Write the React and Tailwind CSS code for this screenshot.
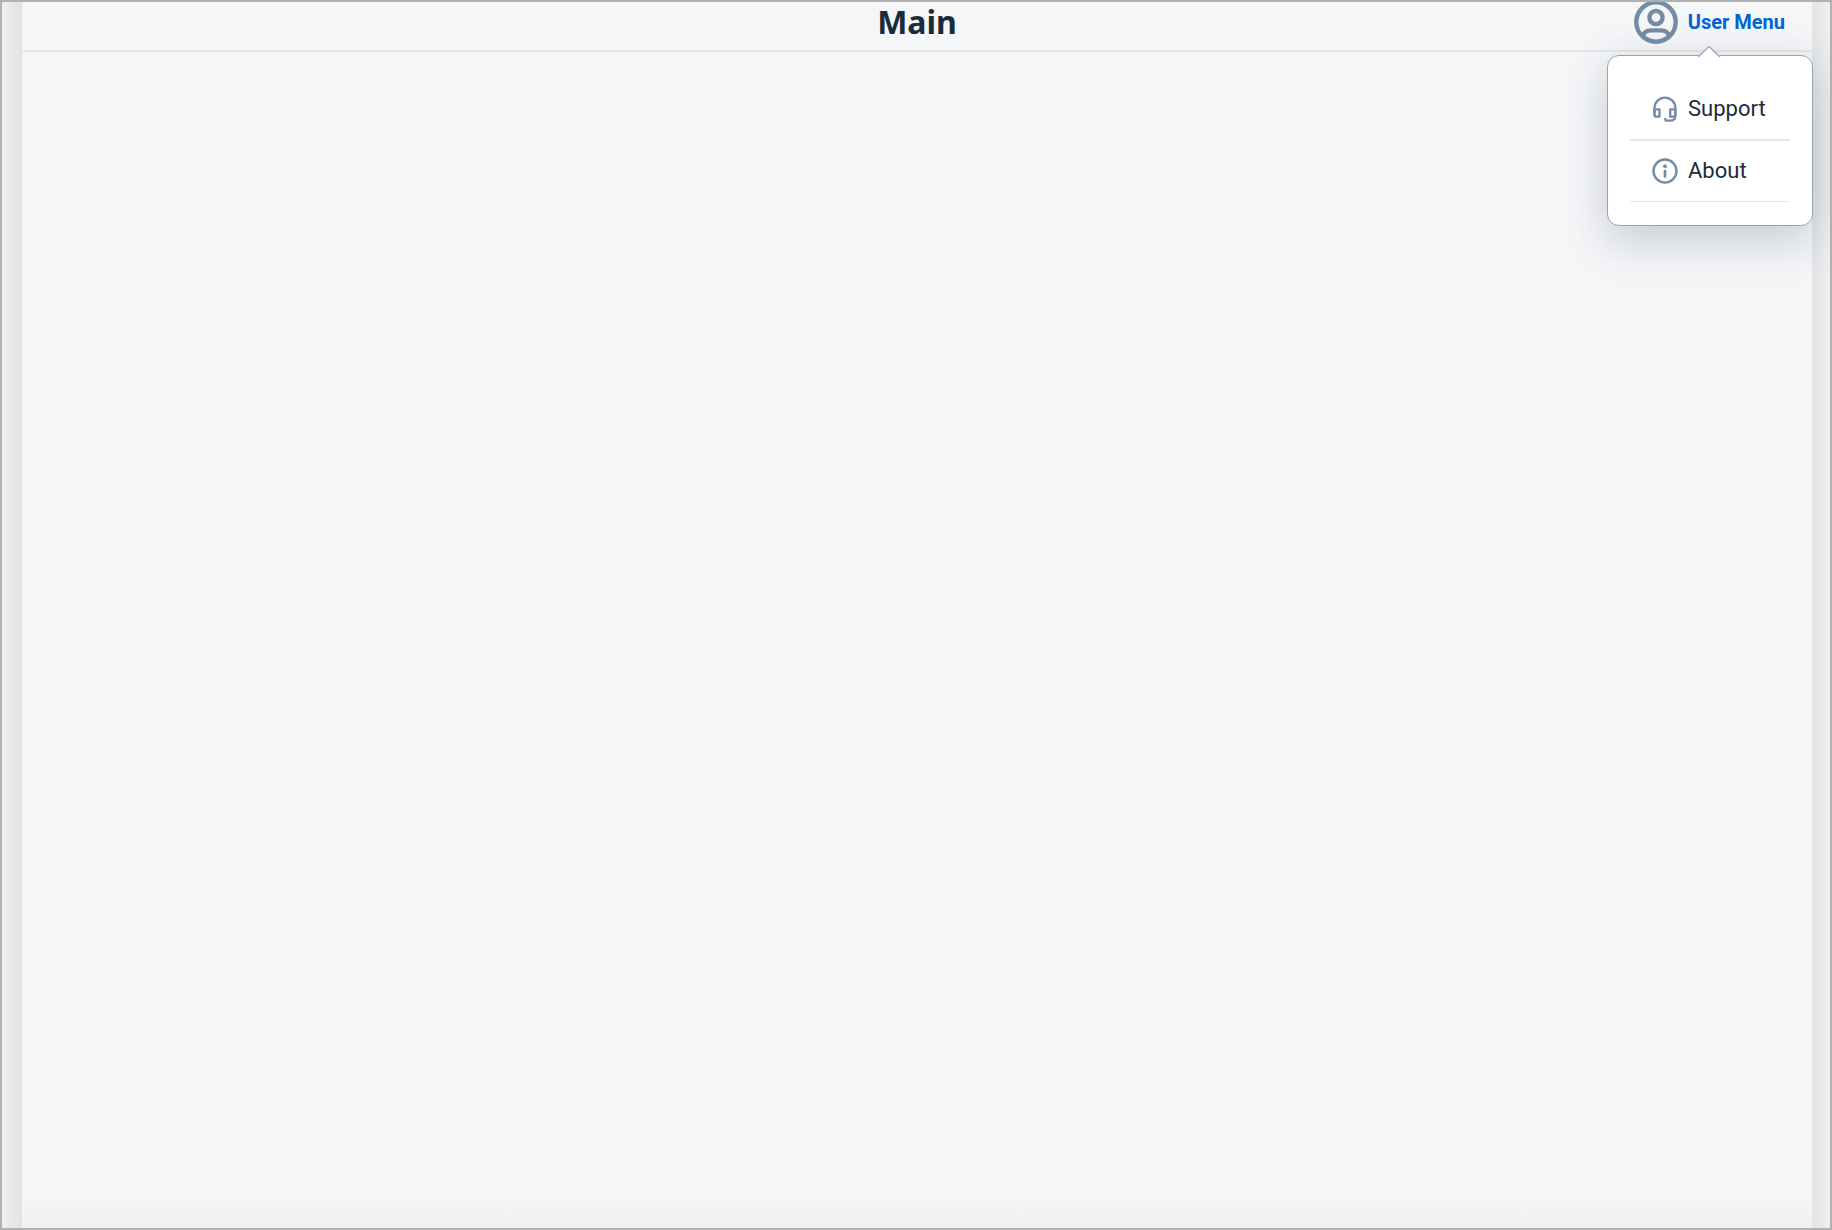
import React from "react";

function UserIcon() {
  return (
    <svg className="size-11 shrink-0" viewBox="0 0 44 44" fill="none" stroke="#758ca6" strokeWidth="4.400" aria-hidden="true">
      <circle cx="22" cy="22" r="19.7" />
      <circle cx="22" cy="17.5" r="6.6" />
      <path d="M8.800 36.500c1-4.500 4-6.100 8.200-6.100h10c4.200 0 7.200 1.600 8.200 6.100" />
    </svg>
  );
}

function SupportIcon() {
  return (
    <svg className="size-6.5 shrink-0" viewBox="0 0 26 26" fill="none" stroke="#758ca6" strokeWidth="2.3" strokeLinecap="round" strokeLinejoin="round" aria-hidden="true">
      <path d="M2.500 18.500V12a10.400 10.400 0 0 1 20.900 0V19.300c0 3.600-2 5.400-5 5.400h-3.200c-1.300 0-2-.6-2-1.700" />
      <path d="M2.500 13.300h5v7.300H4.300c-1.200 0-1.800-.7-1.800-1.800z" />
      <path d="M23.400 13.300h-5.200v7.300h5z" />
    </svg>
  );
}

function AboutIcon() {
  return (
    <svg className="size-6.5 shrink-0" viewBox="0 0 26 26" fill="none" stroke="#758ca6" aria-hidden="true">
      <circle cx="13" cy="13" r="11.500" strokeWidth="2.400" />
      <path d="M13 13.200v5.400" strokeWidth="2.700" strokeLinecap="round" />
      <circle cx="13" cy="8.200" r="1.900" fill="#758ca6" stroke="none" />
    </svg>
  );
}

function MenuItem({ icon, label }) {
  return (
    <li className="border-b-2 border-[#e5e6e7] last:border-b">
      <button type="button" role="menuitem" className="flex h-15 w-full items-center gap-2.5 px-5.5 text-[22px] leading-7 text-[#1b2b3b]">
        {icon}
        {label}
      </button>
    </li>
  );
}

function UserMenu() {
  return (
    <div
      id="user-menu"
      role="menu"
      className="absolute top-[53px] -right-px z-10 w-[206px] rounded-xl border border-[#93a4b6] bg-white px-[22px] pt-[23px] pb-[23px] shadow-[0_20px_44px_rgba(80,100,120,0.2),0_0_44px_rgba(80,100,120,0.1)]"
    >
      <svg className="absolute -top-[10px] left-[89px] h-3 w-6" viewBox="0 0 24 12" fill="none" aria-hidden="true">
        <path d="M0 12L1 10L12 1L23 10L24 12Z" fill="white" />
        <path d="M1 11L11 1.500Q12 .5 13 1.500L23 11" stroke="#93a4b6" strokeWidth="1.200" />
      </svg>
      <ul>
        <MenuItem icon={<SupportIcon />} label="Support" />
        <MenuItem icon={<AboutIcon />} label="About" />
      </ul>
    </div>
  );
}

export default function App() {
  return (
    <div className="flex min-h-screen overflow-hidden border-2 border-[#b1b1b1] bg-[#f0f1f3] font-[Roboto,sans-serif]">
      <div className="w-5 shrink-0 bg-linear-to-r from-[#efeff1] to-[#e0e2e4]" />
      <main className="relative flex min-w-0 flex-1 flex-col bg-[#f5f6f8]">
        <header className="border-b-2 border-[#e6e8e9] pb-2">
          <div className="grid h-10 grid-cols-[1fr_auto_1fr] grid-rows-[40px] items-center">
            <h1 className="col-start-2 font-['Noto_Sans',sans-serif] text-[32px] leading-10 font-bold text-[#1b2b3b]">Main</h1>
            <button
              type="button"
              aria-haspopup="menu"
              aria-expanded="true"
              aria-controls="user-menu"
              className="mr-[27px] flex h-10 items-center gap-2.5 justify-self-end text-xl leading-7 font-bold text-[#0064d9]"
            >
              <UserIcon />
              User Menu
            </button>
          </div>
        </header>
        <UserMenu />
        <div className="flex-1" />
        <div className="h-8 bg-linear-to-b from-transparent to-[#eff0f2]" />
      </main>
      <div className="w-[18px] shrink-0 bg-linear-to-r from-[#e2e4e6] to-[#eeeff0]" />
    </div>
  );
}
